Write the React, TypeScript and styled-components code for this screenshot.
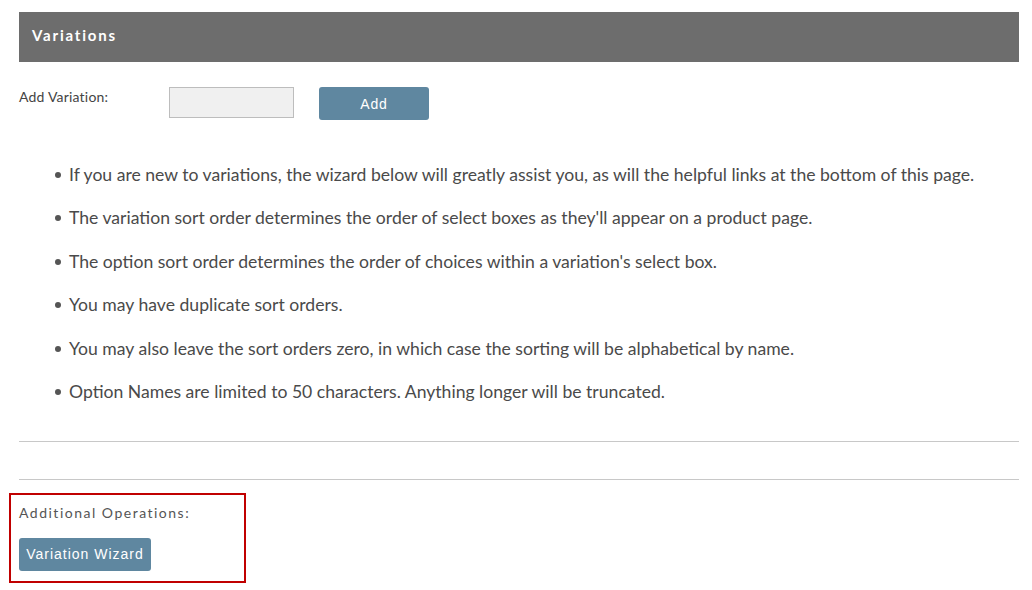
import styled, { createGlobalStyle } from "styled-components";

const GlobalStyle = createGlobalStyle`
    body {
        margin: 0;
        background: #fff;
        font-family: Lato, "Open Sans", sans-serif;
    }
`

const Page = styled.div`
    padding: 12px 13px 0 19px;
    width: 1000px;
`

const HeaderBar = styled.div`
    height: 50px;
    background-color: #6d6d6d;
    display: flex;
    align-items: center;
    padding: 0 13px;
    box-sizing: border-box;

    h2 {
        margin: 0;
        color: #fff;
        font-size: 15px;
        font-weight: 700;
        letter-spacing: 1.8px;
        padding-bottom: 5px;
    }
`

const FormRow = styled.div`
    display: flex;
    align-items: flex-start;
    margin-top: 25px;
    height: 33px;
`

const FieldLabel = styled.label`
    width: 150px;
    font-size: 14px;
    letter-spacing: 0.2px;
    color: #444;
    line-height: 20px;
`

const TextInput = styled.input`
    width: 125px;
    height: 31px;
    box-sizing: border-box;
    background: #f0f0f0;
    border: 1px solid #bdbdbd;
    margin-right: 25px;
`

const Button = styled.button<{ $wide?: boolean }>`
    height: 33px;
    width: ${p => (p.$wide ? "132px" : "110px")};
    background-color: #5f87a0;
    color: #fff;
    border: 0;
    border-radius: 3px;
    font-family: "Liberation Sans", Arial, sans-serif;
    font-size: 14px;
    letter-spacing: ${p => (p.$wide ? "1px" : "0.8px")};
    padding: 0;
`

const Notes = styled.ul`
    margin: 42px 0 0;
    padding: 0 0 0 50px;
    list-style: none;

    li {
        position: relative;
        font-size: 17.6px;
        line-height: 26px;
        color: #4a4a4a;
        margin-bottom: 17.4px;
    }

    li:last-child {
        margin-bottom: 0;
    }

    li::before {
        content: "";
        position: absolute;
        left: -14px;
        top: 10px;
        width: 6px;
        height: 6px;
        border-radius: 50%;
        background: #555;
    }
`

const Rule = styled.hr<{ $gap: number }>`
    border: 0;
    border-top: 1px solid #c8c8c8;
    margin: ${p => p.$gap}px 0 0;
`

const OperationsBox = styled.div`
    margin: 13px 0 0 -10px;
    width: 237px;
    height: 90px;
    box-sizing: border-box;
    border: 2px solid #c00000;
    padding: 8px 8px 0;

    p {
        margin: 0 0 15px;
        font-size: 14px;
        letter-spacing: 1.5px;
        color: #555;
        line-height: 20px;
    }
`

const notes = [
    "If you are new to variations, the wizard below will greatly assist you, as will the helpful links at the bottom of this page.",
    "The variation sort order determines the order of select boxes as they'll appear on a product page.",
    "The option sort order determines the order of choices within a variation's select box.",
    "You may have duplicate sort orders.",
    "You may also leave the sort orders zero, in which case the sorting will be alphabetical by name.",
    "Option Names are limited to 50 characters. Anything longer will be truncated.",
]

export default function App() {
    return (
        <Page>
            <GlobalStyle />
            <HeaderBar>
                <h2>Variations</h2>
            </HeaderBar>
            <FormRow>
                <FieldLabel>Add Variation:</FieldLabel>
                <TextInput type="text" />
                <Button>Add</Button>
            </FormRow>
            <Notes>
                {notes.map(n => (
                    <li key={n}>{n}</li>
                ))}
            </Notes>
            <Rule $gap={36} />
            <Rule $gap={37} />
            <OperationsBox>
                <p>Additional Operations:</p>
                <Button $wide>Variation Wizard</Button>
            </OperationsBox>
        </Page>
    );
}
